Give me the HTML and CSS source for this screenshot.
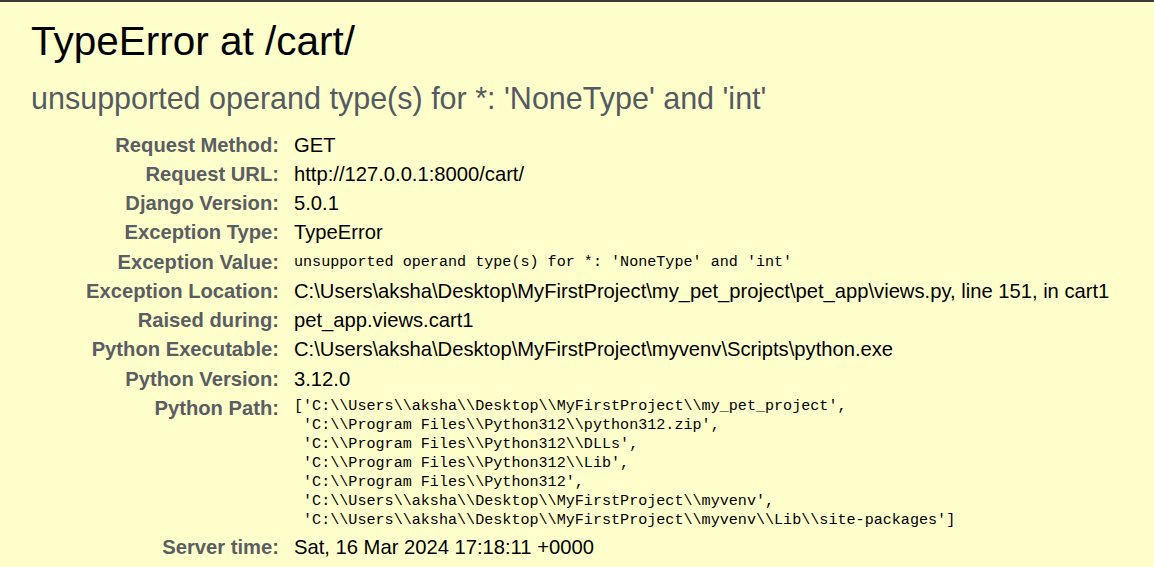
FILE: index.html
```html
<!DOCTYPE html>
<html lang="en">
<head>
<meta charset="utf-8">
<title>TypeError at /cart/</title>
<link rel="stylesheet" href="styles.css">
</head>
<body>
<div class="summary">
  <h1 class="title">TypeError at /cart/</h1>
  <pre class="exception-value">unsupported operand type(s) for *: 'NoneType' and 'int'</pre>
  <table class="meta">
    <tbody>
      <tr><th>Request Method:</th><td>GET</td></tr>
      <tr><th>Request URL:</th><td>http://127.0.0.1:8000/cart/</td></tr>
      <tr><th>Django Version:</th><td>5.0.1</td></tr>
      <tr><th>Exception Type:</th><td>TypeError</td></tr>
      <tr><th>Exception Value:</th><td><pre class="code code-inline">unsupported operand type(s) for *: 'NoneType' and 'int'</pre></td></tr>
      <tr><th>Exception Location:</th><td><span class="fname">C:\Users\aksha\Desktop\MyFirstProject\my_pet_project\pet_app\views.py</span>, line 151, in cart1</td></tr>
      <tr><th>Raised during:</th><td>pet_app.views.cart1</td></tr>
      <tr><th>Python Executable:</th><td>C:\Users\aksha\Desktop\MyFirstProject\myvenv\Scripts\python.exe</td></tr>
      <tr><th>Python Version:</th><td>3.12.0</td></tr>
      <tr><th>Python Path:</th><td><pre class="code">['C:\\Users\\aksha\\Desktop\\MyFirstProject\\my_pet_project',
 'C:\\Program Files\\Python312\\python312.zip',
 'C:\\Program Files\\Python312\\DLLs',
 'C:\\Program Files\\Python312\\Lib',
 'C:\\Program Files\\Python312',
 'C:\\Users\\aksha\\Desktop\\MyFirstProject\\myvenv',
 'C:\\Users\\aksha\\Desktop\\MyFirstProject\\myvenv\\Lib\\site-packages']</pre></td></tr>
      <tr><th>Server time:</th><td>Sat, 16 Mar 2024 17:18:11 +0000</td></tr>
    </tbody>
  </table>
</div>
</body>
</html>
```

FILE: styles.css
```css
html {
  background: #ffffcc;
}

body {
  margin: 0;
  border-top: 2px solid #3a3a3a;
  background: #ffffcc;
  font-family: "Liberation Sans", Arial, sans-serif;
  font-size: 20.2px;
  color: #000;
}

.summary {
  background: #ffffcc;
  padding: 16px 20px 20px 31px;
}

.title {
  margin: 0;
  font-size: 40.5px;
  font-weight: normal;
  line-height: 46px;
  color: #000;
}

.exception-value {
  margin: 17px 0 15px 0;
  font-family: "Liberation Sans", Arial, sans-serif;
  font-size: 30.5px;
  line-height: 34.5px;
  color: #545a62;
  white-space: pre-wrap;
}

.meta {
  border: none;
  border-collapse: collapse;
  width: 100%;
}

.meta th,
.meta td {
  vertical-align: top;
  line-height: 23.25px;
}

.meta th {
  width: 244px;
  padding: 3px 10px 3px 4px;
  text-align: right;
  font-weight: bold;
  color: #5a5d63;
  white-space: nowrap;
}

.meta td {
  padding: 3px 4px 3px 5px;
  white-space: nowrap;
}

.code {
  margin: 0;
  font-family: "Liberation Mono", "Courier New", monospace;
  font-size: 15.1px;
  line-height: 19px;
  color: #000;
}

.code-inline {
  line-height: 23.25px;
}
```
